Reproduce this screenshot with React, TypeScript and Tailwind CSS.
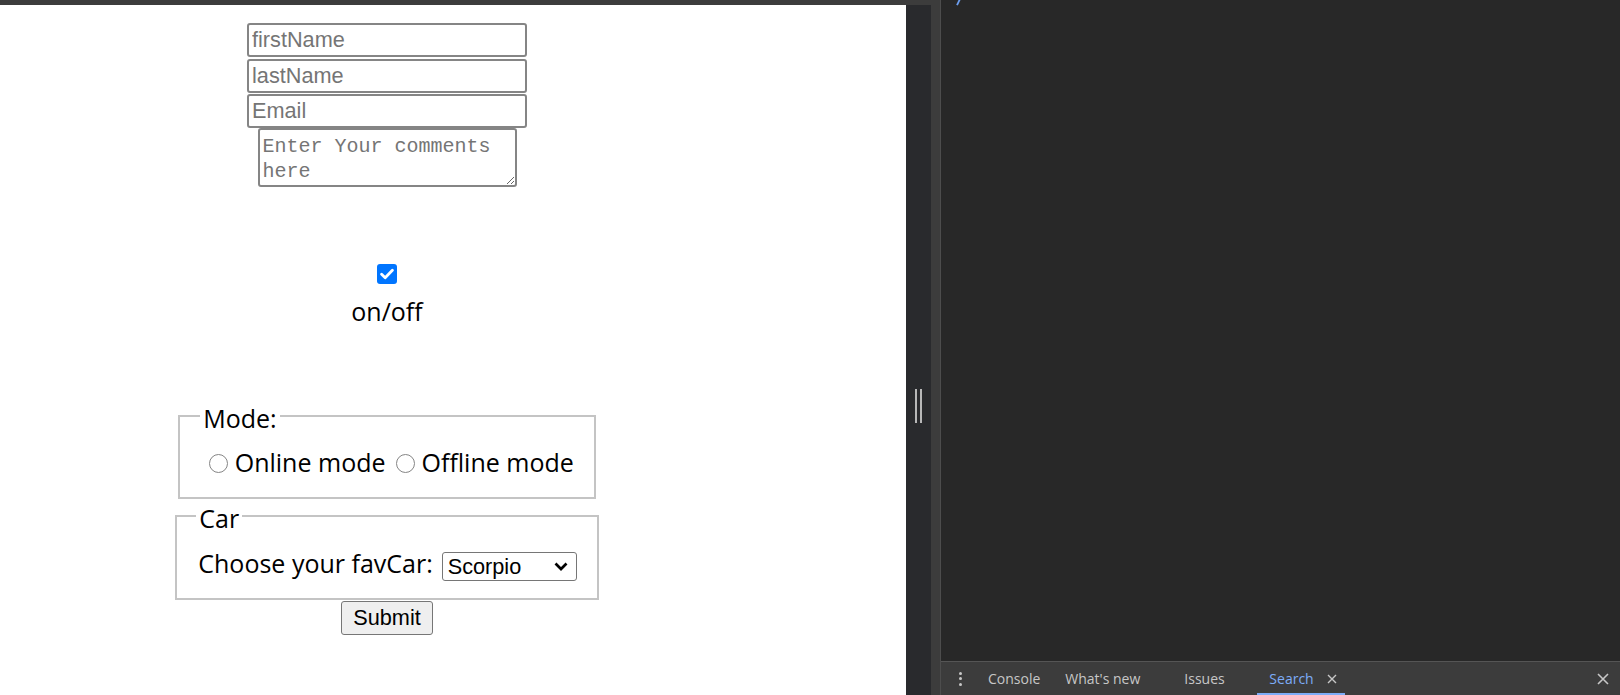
import { useState } from "react";

const sans = "font-['Open_Sans','Noto_Sans',sans-serif]";
const arial = "font-['Liberation_Sans',Arial,sans-serif]";

const TextField = ({ placeholder }: { placeholder: string }) => (
  <input
    type="text"
    placeholder={placeholder}
    className={`${arial} w-[280px] h-[34px] border-2 border-[#858585] rounded-[3px] pl-[3px] text-[21.7px] text-black placeholder:text-[#757575] bg-white outline-none`}
  />
);

const Radio = ({ className = "" }: { className?: string }) => (
  <span
    className={`w-[19px] h-[19px] mt-[9px] rounded-full border-[1.5px] border-[#858585] bg-white shrink-0 ${className}`}
  />
);

export default function App() {
  const [checked, setChecked] = useState(true);
  const [car, setCar] = useState("Scorpio");

  return (
    <div className="w-[1620px] h-[695px] flex overflow-hidden bg-[#282828]">
      {/* page + resize gutter */}
      <div className="w-[931px] shrink-0 flex flex-col">
        <div className="h-[5px] bg-[#3c3c3c]" />
        <div className="flex flex-1">
          <main className={`${sans} w-[906px] bg-white text-black`}>
            <form
              className="w-[774px] flex flex-col items-center pt-[18px]"
              onSubmit={(e) => e.preventDefault()}
            >
              <div className="flex flex-col gap-[1.5px]">
                <TextField placeholder="firstName" />
                <TextField placeholder="lastName" />
                <TextField placeholder="Email" />
              </div>
              <textarea
                rows={2}
                placeholder="Enter Your comments here"
                className="font-['Liberation_Mono',monospace] w-[259px] h-[59px] border-2 border-[#858585] rounded-[3px] pl-[3px] pt-[4px] text-[20px] leading-[25px] placeholder:text-[#757575] outline-none"
              />

              <button
                type="button"
                onClick={() => setChecked(!checked)}
                className={`mt-[77px] w-[20px] h-[20px] rounded-[3px] flex items-center justify-center ${
                  checked ? "bg-[#0075ff]" : "bg-white border-[1.5px] border-[#858585]"
                }`}
              >
                {checked && (
                  <svg width="14" height="12" viewBox="0 0 13 11">
                    <path
                      d="M1.5 5.8 L4.8 9 L11.5 2"
                      fill="none"
                      stroke="white"
                      strokeWidth="2.6"
                      strokeLinecap="round"
                      strokeLinejoin="round"
                    />
                  </svg>
                )}
              </button>
              <div className="mt-[10px] text-[25px] leading-[34px]">on/off</div>

              <fieldset className="mt-[71px] w-fit border-2 border-[#c4c4c4] px-[20px] pt-[12px] pb-[18px]">
                <legend className="px-[3px] text-[25px] leading-[34px]">
                  <span className="relative top-[2px]">Mode:</span>
                </legend>
                <div className="flex items-start text-[25px] leading-[34px]">
                  <Radio className="ml-[8.5px] mr-[7px]" />
                  <span>Online mode</span>
                  <Radio className="ml-[10px] mr-[7px]" />
                  <span>Offline mode</span>
                </div>
              </fieldset>

              <fieldset className="w-fit border-2 border-[#c4c4c4] pl-[19px] pr-[20px] pt-[13px] pb-[17px]">
                <legend className="px-[3px] text-[25px] leading-[34px]">
                  <span className="relative top-[2px]">Car</span>
                </legend>
                <div className="flex items-start text-[25px] leading-[34px]">
                  <span className="ml-[2px]">Choose your favCar:</span>
                  <span className="relative flex ml-[9px] mt-[6px]">
                    <select
                      value={car}
                      onChange={(e) => setCar(e.target.value)}
                      className={`${arial} appearance-none w-[135px] h-[29px] border border-[#767676] rounded-[3px] pl-[5px] text-[21.7px] leading-[27px] bg-white text-black outline-none`}
                    >
                      <option>Scorpio</option>
                      <option>Thar</option>
                      <option>XUV700</option>
                    </select>
                    <svg
                      width="14"
                      height="9"
                      viewBox="0 0 14 9"
                      className="absolute right-[8.5px] top-[10px] pointer-events-none"
                    >
                      <path
                        d="M1.5 1.5 L7 7 L12.5 1.5"
                        fill="none"
                        stroke="black"
                        strokeWidth="2.7"
                      />
                    </svg>
                  </span>
                </div>
              </fieldset>

              <button
                type="submit"
                className={`${arial} mt-[1px] w-[92px] h-[34px] bg-[#efefef] border border-[#767676] rounded-[3px] text-[21.7px] text-black`}
              >
                Submit
              </button>
            </form>
          </main>
          <div className="w-[25px] bg-[#292a2d] flex justify-center pt-[384px]">
            <div className="flex gap-[3px] h-[34px]">
              <span className="w-[2px] h-full bg-[#b8b8b8]" />
              <span className="w-[2px] h-full bg-[#b8b8b8]" />
            </div>
          </div>
        </div>
      </div>

      {/* split strip */}
      <div className="w-[10px] shrink-0 bg-[#3c3c3c] border-r border-[#4d4d4d]" />

      {/* devtools */}
      <div className={`${sans} flex-1 flex flex-col`}>
        <div className="flex-1 pl-[14px]">
          <svg width="6" height="6" viewBox="0 0 6 6">
            <path d="M5 -1 L2 5.2" stroke="#6d9ff0" strokeWidth="1.8" fill="none" />
          </svg>
        </div>
        <div className="h-[34px] border-t border-[#555555] bg-[#3c3c3c] flex items-center text-[14px] leading-[19px] text-[#c7c7c7]">
          <div className="ml-[17.5px] flex flex-col gap-[2.5px]">
            <span className="w-[3px] h-[3px] rounded-full bg-[#c7c7c7]" />
            <span className="w-[3px] h-[3px] rounded-full bg-[#c7c7c7]" />
            <span className="w-[3px] h-[3px] rounded-full bg-[#c7c7c7]" />
          </div>
          <span className="ml-[26.5px]">Console</span>
          <span className="ml-[25px]">What's new</span>
          <span className="ml-[44px]">Issues</span>
          <div className="ml-[32.7px] h-full flex items-center pl-[12px] pr-[8.3px] border-b-2 border-[#7cacf8] pt-[2px]">
            <span className="text-[#7cacf8]">Search</span>
            <svg width="10" height="10" viewBox="0 0 10 10" className="ml-[13px]">
              <path d="M1 1 L9 9 M9 1 L1 9" stroke="#c7c7c7" strokeWidth="1.4" />
            </svg>
          </div>
          <svg width="12" height="12" viewBox="0 0 12 12" className="ml-auto mr-[11px]">
            <path d="M1 1 L11 11 M11 1 L1 11" stroke="#c7c7c7" strokeWidth="1.6" />
          </svg>
        </div>
      </div>
    </div>
  );
}
